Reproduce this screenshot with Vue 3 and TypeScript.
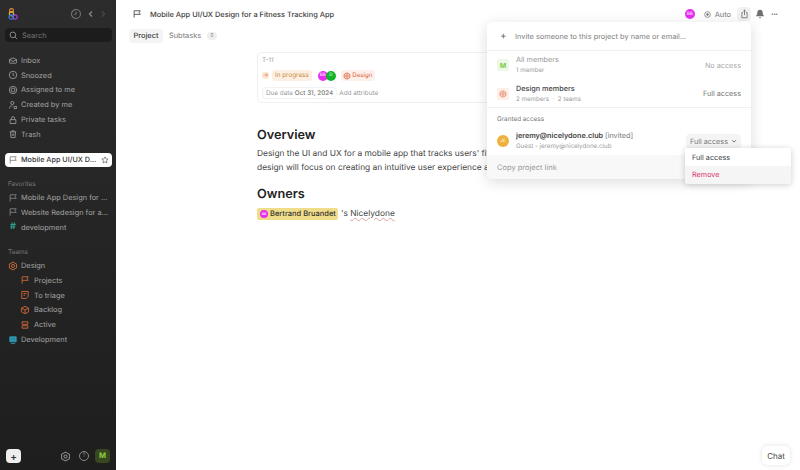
<script setup lang="ts">
const nav = [
  { label: 'Inbox', d: 'M2 6.500 7 4l5 2.500v4a1 1 0 0 1-1 1H3a1 1 0 0 1-1-1zM2 6.500l5 2.500 5-2.500' },
  { label: 'Snoozed', d: 'M7 1.800a5.200 5.200 0 1 0 0 10.400A5.200 5.200 0 0 0 7 1.800zM7 4.200V7l2 1.200' },
  { label: 'Assigned to me', d: 'M7 1.800a5.200 5.200 0 1 0 0 10.400A5.200 5.200 0 0 0 7 1.800zM7 4.300a2.700 2.700 0 1 0 0 5.400 2.700 2.700 0 0 0 0-5.400z' },
  { label: 'Created by me', d: 'M6 2a2.200 2.200 0 1 0 0 4.400A2.200 2.200 0 0 0 6 2zM2 12c0-2.400 1.600-3.800 4-3.800M8.500 9h3.500v3H8.500z' },
  { label: 'Private tasks', d: 'M3 6.500h8V12H3zM4.800 6.500V4.500a2.200 2.200 0 0 1 4.400 0v2' },
  { label: 'Trash', d: 'M2.500 4h9M5.500 4V2.500h3V4M3.500 4l.6 8h5.800l.6-8M6 6.500v3M8 6.500v3' },
]
const flag = 'M3 12V2.500h8.500L10 5l1.500 2.500H3'
const team = [
  { label: 'Projects', d: flag },
  { label: 'To triage', d: 'M2.500 2h9v7l-3 3h-6zM5 5h4M5 7.500h2' },
  { label: 'Backlog', d: 'M7 1.800 12 4.500v5L7 12.200 2 9.500v-5zM2 4.500 7 7l5-2.500M7 7v5' },
  { label: 'Active', d: 'M3 2.500h8v3.500H3zM3 8h8v3.500H3z' },
]
</script>

<template>
  <div class="app">
    <aside class="side">
      <div class="side-top">
        <svg class="logo" width="10" height="12" viewBox="0 0 10 12" fill="none" stroke-width="1.200">
          <circle cx="3.500" cy="2.500" r="1.900" stroke="#e8883a" />
          <circle cx="3.500" cy="5.800" r="2.200" stroke="#d9b53a" />
          <circle cx="7" cy="9" r="2.200" stroke="#a83ad9" />
          <circle cx="3.200" cy="9" r="2.200" stroke="#3a7bd9" />
        </svg>
        <div class="spacer"></div>
        <svg width="12" height="12" viewBox="0 0 14 14" fill="none" stroke="#7a7a7a" stroke-width="1.200"><path d="M7 1.800a5.200 5.200 0 1 0 0 10.400A5.200 5.200 0 0 0 7 1.800zM7 4.200V7l-2 1" /></svg>
        <svg class="chev first" width="8" height="8" viewBox="0 0 8 8" fill="none" stroke="#8c8c8c" stroke-width="1.200"><path d="M5 1.500 2.500 4 5 6.500" /></svg>
        <svg class="chev" width="8" height="8" viewBox="0 0 8 8" fill="none" stroke="#4a4a4a" stroke-width="1.200"><path d="M3 1.500 5.500 4 3 6.500" /></svg>
      </div>

      <div class="search">
        <svg width="9" height="9" viewBox="0 0 12 12" fill="none" stroke="#8a8a8a" stroke-width="1.300"><circle cx="5.200" cy="5.200" r="3.800" /><path d="m8 8 2.800 2.800" /></svg>
        <span>Search</span>
      </div>

      <nav class="nav">
        <div v-for="n in nav" :key="n.label" class="row">
          <svg class="ic" viewBox="0 0 14 14" fill="none" stroke="#a6a6a6" stroke-width="1.100"><path :d="n.d" /></svg>
          <span>{{ n.label }}</span>
        </div>
      </nav>

      <div class="active-row">
        <svg class="ic" viewBox="0 0 14 14" fill="none" stroke="#777" stroke-width="1.100"><path :d="flag" /></svg>
        <span class="grow">Mobile App UI/UX D...</span>
        <svg class="star" viewBox="0 0 12 12" fill="none" stroke="#555" stroke-width="1"><path d="m6 1.300 1.450 3 3.250.45-2.350 2.300.55 3.250L6 8.750 3.100 10.300l.55-3.250L1.300 4.750l3.250-.45z" /></svg>
      </div>

      <div class="heading fav">Favorites</div>
      <div class="row">
        <svg class="ic" viewBox="0 0 14 14" fill="none" stroke="#8f8f8f" stroke-width="1.100"><path :d="flag" /></svg>
        <span>Mobile App Design for ...</span>
      </div>
      <div class="row">
        <svg class="ic" viewBox="0 0 14 14" fill="none" stroke="#8f8f8f" stroke-width="1.100"><path :d="flag" /></svg>
        <span>Website Redesign for a...</span>
      </div>
      <div class="row">
        <span class="ic hash">#</span>
        <span>development</span>
      </div>

      <div class="heading teams">Teams</div>
      <div class="row">
        <svg class="ic" viewBox="0 0 14 14" fill="none" stroke="#d9703a" stroke-width="1.200"><path d="M7 1.500 12 4.300v5.400L7 12.500 2 9.700V4.300z" /><circle cx="7" cy="7" r="2.200" /></svg>
        <span>Design</span>
      </div>
      <div v-for="t in team" :key="t.label" class="row sub">
        <svg class="ic" viewBox="0 0 14 14" fill="none" stroke="#c9673a" stroke-width="1.300"><path :d="t.d" /></svg>
        <span>{{ t.label }}</span>
      </div>
      <div class="row">
        <svg class="ic" viewBox="0 0 14 14" fill="#2a8fa8" stroke="#39a9c4" stroke-width="1"><path d="M2.500 2.500h9v7h-9zM4 12h6" /></svg>
        <span>Development</span>
      </div>

      <div class="side-foot">
        <button class="plus">+</button>
        <div class="spacer"></div>
        <svg width="11" height="11" viewBox="0 0 14 14" fill="none" stroke="#8a8a8a" stroke-width="1.300"><path d="M7 1.500 12 4.300v5.400L7 12.500 2 9.700V4.300z" /><circle cx="7" cy="7" r="2" /></svg>
        <span class="help">?</span>
        <span class="m-badge">M</span>
      </div>
    </aside>

    <main class="main">
      <header class="top">
        <svg class="flag" viewBox="0 0 14 14" fill="none" stroke="#444" stroke-width="1.200"><path :d="flag" /></svg>
        <span class="title">Mobile App UI/UX Design for a Fitness Tracking App</span>
        <div class="spacer"></div>
        <span class="avatar pink">BB</span>
        <span class="auto">
          <svg width="7" height="7" viewBox="0 0 12 12" fill="none" stroke="#777" stroke-width="1.300"><circle cx="6" cy="6" r="4.900" /><circle cx="6" cy="6" r="1.600" fill="#777" /></svg>
          Auto
        </span>
        <span class="share">
          <svg width="9" height="10" viewBox="0 0 12 13" fill="none" stroke="#777" stroke-width="1.200"><path d="M4 4.500H2.500v7h7v-7H8M6 8V1.200M4.300 2.800 6 1.200l1.700 1.600" /></svg>
        </span>
        <svg class="bell" width="10" height="10" viewBox="0 0 10 11" fill="#6f6f6f"><path d="M5 .7c-2 0-3 1.500-3 3.300 0 1.800-.6 2.500-1.300 3.300v.7h8.600v-.7C8.600 6.500 8 5.800 8 4 8 2.200 7 .7 5 .7zM3.800 9.200h2.400C6.100 10 5.600 10.400 5 10.400s-1.100-.4-1.200-1.200z" /></svg>
        <span class="dots">···</span>
      </header>

      <div class="tabs">
        <span class="tab on">Project</span>
        <span class="tab">Subtasks</span>
        <span class="count">5</span>
      </div>

      <div class="doc">
        <section class="card">
          <div class="tid">T-11</div>
          <div class="meta">
            <span class="arrow">→</span>
            <span class="status">In progress</span>
            <span class="stack"><span class="avatar pink">BB</span><span class="avatar green">D</span></span>
            <span class="team">
              <svg width="8" height="8" viewBox="0 0 14 14" fill="none" stroke="#d9603a" stroke-width="1.500"><path d="M7 1.500 12 4.300v5.400L7 12.500 2 9.700V4.300z" /><circle cx="7" cy="7" r="2.200" /></svg>
              Design
            </span>
          </div>
          <div class="attrs">
            <span class="due">Due date <b>Oct 31, 2024</b></span>
            <span class="add">Add attribute</span>
          </div>
        </section>

        <h2>Overview</h2>
        <p>Design the UI and UX for a mobile app that tracks users' fitness goals and activity.<br />design will focus on creating an intuitive user experience across every screen.</p>
        <h2 class="owners">Owners</h2>
        <p class="owner-line">
          <span class="mention"><span class="avatar pink tiny">BB</span>Bertrand Bruandet</span>
          <span class="poss">'s <span class="squiggle">Nicelydone</span></span>
        </p>
      </div>

      <button class="chat">Chat</button>

      <section class="pop">
        <div class="invite">
          <span class="inv-plus">+</span>
          <span>Invite someone to this project by name or email...</span>
        </div>
        <div class="group">
          <div class="line muted">
            <span class="sq green-sq">M</span>
            <div class="who"><div class="name">All members</div><div class="subl">1 member</div></div>
            <span class="acc">No access</span>
          </div>
          <div class="line">
            <span class="sq orange-sq">
              <svg width="8" height="8" viewBox="0 0 14 14" fill="none" stroke="#e0734a" stroke-width="1.400"><path d="M7 1.500 12 4.300v5.400L7 12.500 2 9.700V4.300z" /><circle cx="7" cy="7" r="2.200" /></svg>
            </span>
            <div class="who"><div class="name dark">Design members</div><div class="subl">2 members &nbsp;·&nbsp; 2 teams</div></div>
            <span class="acc">Full access</span>
          </div>
        </div>
        <div class="granted">
          <div class="g-head">Granted access</div>
          <div class="line guest">
            <span class="round">JE</span>
            <div class="who"><div class="name dark"><b>jeremy@nicelydone.club</b> <i>[invited]</i></div><div class="subl">Guest - jeremy@nicelydone.club</div></div>
            <span class="select">Full access
              <svg width="6" height="6" viewBox="0 0 8 8" fill="none" stroke="#666" stroke-width="1.300"><path d="M1.500 3 4 5.500 6.500 3" /></svg>
            </span>
          </div>
        </div>
        <div class="copy">Copy project link</div>
      </section>

      <div class="menu">
        <div class="opt">Full access</div>
        <div class="opt danger">Remove</div>
      </div>
    </main>
  </div>
</template>

<style>
html, body { margin: 0; overflow: hidden; }
</style>

<style scoped>
* { box-sizing: border-box; }
.app { display: flex; width: 800px; height: 470px; overflow: hidden; font-family: Inter, "Liberation Sans", sans-serif; background: #fff; color: #333; text-rendering: geometricPrecision; }
.spacer { flex: 1; }

.side { width: 116px; height: 470px; flex: none; padding: 0 4px 0 5px; display: flex; flex-direction: column; background: linear-gradient(#2c2c2c, #1e1e1e); color: #a3a3a3; font-size: 7.400px; }
.side-top { height: 28px; display: flex; align-items: center; gap: 4px; padding: 0 5px 0 3px; flex: none; }
.first { margin-left: 1px; }
.search { height: 14px; display: flex; align-items: center; gap: 4px; padding: 0 4px; border-radius: 4px; background: #1c1c1c; color: #777; flex: none; }
.nav { margin-top: 11px; }
.row { height: 14.800px; display: flex; align-items: center; gap: 3px; padding-left: 3px; white-space: nowrap; flex: none; }
.row.sub { padding-left: 15px; gap: 4px; }
.ic { width: 10px; height: 10px; flex: none; }
.hash { color: #2fa58f; font-weight: 700; text-align: center; font-size: 9px; line-height: 10px; }
.active-row { margin-top: 11px; height: 14px; background: #fff; border-radius: 4px; display: flex; align-items: center; gap: 3px; padding: 0 3px; color: #333; font-weight: 500; white-space: nowrap; flex: none; font-size: 7.250px; }
.grow { flex: 1; }
.star { width: 8px; height: 8px; }
.heading { font-size: 6.400px; color: #777; padding-left: 3px; line-height: 9px; flex: none; }
.fav { margin-top: 13px; margin-bottom: 1.500px; }
.teams { margin-top: 13px; margin-bottom: 1.500px; }
.side-foot { margin-top: auto; height: 14px; display: flex; align-items: center; padding: 0 2px 0 1px; flex: none; margin-bottom: 7px; }
.side-foot svg { margin-right: 8px; }
.plus { width: 15px; height: 14px; border: 0; padding: 0; border-radius: 4px; background: #eee; color: #333; font: 600 10px/14px Inter, sans-serif; }
.help { width: 10px; height: 10px; border: 1px solid #8a8a8a; border-radius: 50%; font-size: 6px; line-height: 8px; text-align: center; color: #8a8a8a; margin-right: 6px; }
.m-badge { width: 15px; height: 14px; border-radius: 4px; background: #37471f; color: #8ccf3a; font-size: 7.500px; font-weight: 700; line-height: 14px; text-align: center; }

.main { flex: 1; position: relative; min-width: 0; }
.top { height: 28px; display: flex; align-items: center; padding: 0 21px 0 16px; }
.flag { width: 10px; height: 10px; margin-right: 8px; flex: none; }
.title { font-size: 7.400px; font-weight: 500; color: #3a3a3a; white-space: nowrap; }
.avatar { width: 10px; height: 10px; border-radius: 50%; display: inline-flex; align-items: center; justify-content: center; font-size: 4.500px; color: #fff; flex: none; }
.pink { background: #e52ef0; }
.green { background: #12b52a; margin-left: -2px; color: #fff; }
.auto { display: flex; align-items: center; gap: 4px; margin-left: 9px; font-size: 7.400px; color: #777; }
.share { width: 14px; height: 14px; border-radius: 4px; background: #f1f1f1; display: flex; align-items: center; justify-content: center; margin-left: 6px; }
.bell { margin-left: 4px; }
.dots { margin-left: 6px; font-size: 8px; font-weight: 700; color: #666; width: 8px; letter-spacing: -.5px; }

.tabs { display: flex; align-items: center; padding-left: 13px; margin-top: 1px; height: 14px; font-size: 7.400px; color: #777; }
.tab { padding: 0 4px; height: 14px; line-height: 14px; border-radius: 4px; }
.tab.on { width: 34px; background: #f4f4f4; color: #3a3a3a; font-weight: 500; margin-right: 2px; padding: 0; text-align: center; }
.count { width: 10px; height: 8px; background: #eee; border-radius: 4px; font-size: 5px; line-height: 8px; text-align: center; margin-left: 2px; }

.doc { width: 403px; margin: 9px 0 0 141px; }
.card { height: 51px; border: 1px solid #f0f0f0; border-radius: 5px; padding: 3px 4px; font-size: 6.350px; color: #9a9a9a; }
.tid { line-height: 9px; }
.meta { margin-top: 5px; height: 11px; display: flex; align-items: center; }
.arrow { width: 7px; height: 7px; background: #fde8d8; color: #d9703a; font-size: 6px; line-height: 7px; text-align: center; border-radius: 2px; margin-right: 3px; }
.status { height: 11px; line-height: 11px; padding: 0 3px; background: #fdf0e3; color: #c98a3f; border-radius: 3px; }
.stack { display: inline-flex; margin: 0 5.500px 0 6px; }
.team { height: 11px; display: inline-flex; gap: 1px; align-items: center; padding: 0 3px 0 2px; background: #fdf0eb; color: #d9603a; border-radius: 3px; font-size: 6.100px; }
.attrs { display: flex; align-items: center; margin-top: 6px; height: 12px; }
.due { border: 1px solid #f2f2f2; border-radius: 4px; padding: 0 3px; height: 12px; line-height: 10px; }
.due b { font-weight: 500; color: #777; }
.add { margin-left: 2px; }

h2 { margin: 23.500px 0 0; font-size: 12.700px; line-height: 17px; font-weight: 600; color: #222; }
h2.owners { margin-top: 10.500px; }
p { margin: 3.500px 0 0; font-size: 8.400px; line-height: 14px; color: #444; white-space: nowrap; }
.owner-line { margin-top: 4.500px; display: flex; align-items: center; height: 13px; }
.mention { display: inline-flex; align-items: center; gap: 2px; height: 12px; background: #f0dd8a; border-radius: 2px; padding: 0 2px 0 3px; font-size: 7.500px; font-weight: 500; color: #333; }
.tiny { width: 8px; height: 8px; font-size: 3.500px; }
.poss { margin-left: 3px; }
.squiggle { text-decoration: underline wavy #e0a0a0 .5px; text-underline-offset: 1px; }

.chat { position: absolute; right: 10px; bottom: 5px; width: 28px; height: 19px; border: 0; border-radius: 5px; background: #fff; box-shadow: 0 0 5px rgba(0,0,0,.12); color: #444; font: 8px Inter, sans-serif; padding: 0; text-rendering: geometricPrecision; }

.pop { position: absolute; left: 371px; top: 22px; width: 264px; height: 157px; background: #fff; border-radius: 5px; box-shadow: 0 3px 14px rgba(0,0,0,.14); font-size: 7.250px; color: #777; overflow: hidden; }
.invite { height: 29px; display: flex; align-items: center; gap: 9px; padding-left: 13px; border-bottom: 1px solid #f0f0f0; color: #808080; font-size: 7.400px; }
.inv-plus { font-size: 10px; color: #666; width: 6px; }
.group { border-bottom: 1px solid #f0f0f0; height: 57px; }
.line { height: 28.500px; display: flex; align-items: center; padding: 0 10px 0 10px; }
.sq { width: 12px; height: 12px; border-radius: 2px; flex: none; margin-right: 7px; display: flex; align-items: center; justify-content: center; font-size: 7px; font-weight: 700; }
.green-sq { background: #eef8e8; color: #7ecb4a; }
.orange-sq { background: #fdeee8; }
.who { flex: 1; min-width: 0; }
.name { line-height: 10px; white-space: nowrap; color: #999; }
.name.dark { color: #444; font-weight: 500; }
.name b { font-weight: 600; }
.name i { font-style: normal; font-weight: 400; color: #777; }
.subl { font-size: 6.200px; line-height: 9px; margin-top: 1px; color: #999; }
.muted .acc { color: #aaa; }
.acc { color: #777; }
.g-head { font-size: 6.350px; color: #777; padding: 7px 0 0 10px; line-height: 9px; height: 16px; }
.granted { height: 47px; }
.line.guest { height: 28px; margin-top: 3px; }
.round { width: 12px; height: 12px; border-radius: 50%; background: #efb13c; color: #fff; font-size: 4.500px; display: flex; align-items: center; justify-content: center; margin-right: 7px; flex: none; }
.select { height: 15px; display: flex; align-items: center; gap: 3px; padding: 0 4px; background: #f4f4f4; border-radius: 4px; color: #777; }
.copy { height: 24px; background: #f8f8f8; padding-left: 10px; line-height: 26px; color: #999; font-size: 7.500px; }

.menu { position: absolute; left: 569px; top: 148px; width: 106px; height: 36px; background: #fff; border-radius: 3px; box-shadow: 0 1px 6px rgba(0,0,0,.2); font-size: 7.250px; color: #444; overflow: hidden; }
.opt { height: 18px; line-height: 19px; padding-left: 7px; }
.opt.danger { background: #f5f5f5; color: #e0306f; line-height: 17px; }
</style>
